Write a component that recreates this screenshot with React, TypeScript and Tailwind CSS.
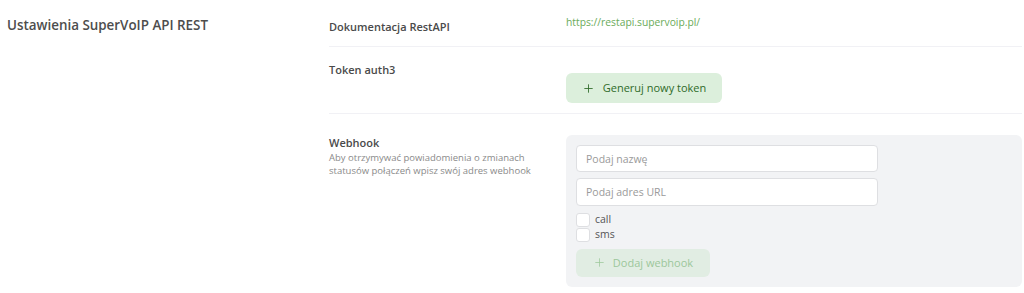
import { Plus } from 'lucide-react';

const font = { fontFamily: '"Open Sans", "Liberation Sans", sans-serif' };

export default function App() {
  return (
    <div className="flex h-[293px] w-[1024px] bg-white text-[#4a4a4a]" style={font}>
      <div className="w-[329px] shrink-0 pl-[7px] pt-[16px]">
        <h2 className="text-[13.4px] font-semibold leading-[18px] text-[#4d4d4d]">Ustawienia SuperVoIP API REST</h2>
      </div>

      <div className="flex flex-1 flex-col pr-[2px]">
        <div className="flex h-[47px] border-b border-[#f1f1f5]">
          <div className="w-[237px] shrink-0 pt-[19px] text-[11px] font-semibold leading-[16px]">Dokumentacja RestAPI</div>
          <a href="#" className="pt-[14px] text-[10.3px] leading-[16px] text-[#6aab5a]">
            https://restapi.supervoip.pl/
          </a>
        </div>

        <div className="flex h-[67px] border-b border-[#f1f1f5]">
          <div className="w-[237px] shrink-0 pt-[15px] text-[11px] font-semibold leading-[16px]">Token auth3</div>
          <div className="pt-[26px]">
            <button className="flex h-[30px] w-[156px] items-center justify-center gap-[8px] rounded-[6px] bg-[#dcefdc] text-[11px] text-[#2f6b2a]">
              <Plus size={13} strokeWidth={1.6} />
              Generuj nowy token
            </button>
          </div>
        </div>

        <div className="flex pt-[21px]">
          <div className="w-[237px] shrink-0">
            <div className="text-[11px] font-semibold leading-[16px]">Webhook</div>
            <p className="text-[9.5px] leading-[13px] text-[#8a8a8a]">
              Aby otrzymywać powiadomienia o zmianach
              <br />
              statusów połączeń wpisz swój adres webhook
            </p>
          </div>
          <div className="flex h-[152px] flex-1 flex-col rounded-[6px] bg-[#f2f3f5] p-[10px]">
            <input
              placeholder="Podaj nazwę"
              className="h-[28px] w-[302px] rounded-[4px] border border-[#dedfe2] bg-white px-[9px] text-[10.5px] outline-none placeholder:text-[#9a9a9a]"
            />
            <input
              placeholder="Podaj adres URL"
              className="mt-[6px] h-[28px] w-[302px] rounded-[4px] border border-[#dedfe2] bg-white px-[9px] text-[10.5px] outline-none placeholder:text-[#9a9a9a]"
            />
            <label className="mt-[7px] flex h-[14px] items-center gap-[5px] text-[10.5px] text-[#555]">
              <span className="h-[14px] w-[14px] rounded-[3px] border border-[#dedfe2] bg-white" />
              call
            </label>
            <label className="mt-[1px] flex h-[15px] items-center gap-[5px] text-[10.5px] text-[#555]">
              <span className="h-[14px] w-[14px] rounded-[3px] border border-[#dedfe2] bg-white" />
              sms
            </label>
            <button className="mt-[6px] flex h-[29px] w-[134px] items-center justify-center gap-[7px] rounded-[6px] bg-[#e1ede3] text-[11px] text-[#9cc79b]">
              <Plus size={13} strokeWidth={1.4} />
              Dodaj webhook
            </button>
          </div>
        </div>
      </div>
    </div>
  );
}
